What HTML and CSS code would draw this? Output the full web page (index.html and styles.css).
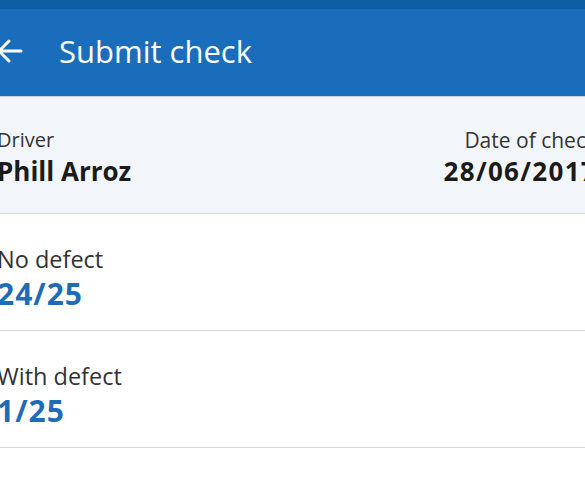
FILE: index.html
```html
<!DOCTYPE html>
<html>
<head>
<meta charset="utf-8">
<link rel="stylesheet" href="styles.css">
</head>
<body>
<div class="screen">
  <div class="statusbar"></div>
  <header class="appbar">
    <svg class="back" width="30" height="30" viewBox="0 0 30 30" aria-hidden="true">
      <path d="M26 15 H4 M14 5 L4 15 L14 25" fill="none" stroke="#fff" stroke-width="3" stroke-linecap="round" stroke-linejoin="round"/>
    </svg>
    <h1 class="title">Submit check</h1>
  </header>
  <section class="summary">
    <div class="field">
      <div class="label">Driver</div>
      <div class="value">Phill Arroz</div>
    </div>
    <div class="field right">
      <div class="label">Date of check</div>
      <div class="value date">28/06/2017</div>
    </div>
  </section>
  <section class="row">
    <div class="label">No defect</div>
    <div class="count">24/25</div>
  </section>
  <section class="row">
    <div class="label">With defect</div>
    <div class="count">1/25</div>
  </section>
</div>
</body>
</html>
```
FILE: styles.css
```css
html, body {
  margin: 0;
  padding: 0;
  background: #ffffff;
  overflow: hidden;
}
body {
  font-family: "Open Sans", "Liberation Sans", sans-serif;
  color: #2b2b2b;
}
.screen {
  width: 600px;
  margin-left: -3px;
}
.statusbar {
  height: 9px;
  background: #0e5ea6;
}
.appbar {
  height: 87px;
  background: #1a6dbb;
  display: flex;
  align-items: center;
  padding-bottom: 4px;
  box-sizing: border-box;
  box-shadow: 0 1px 1px rgba(0,0,0,0.15);
  position: relative;
}
.back {
  margin-left: -2px;
  margin-right: 34px;
}
.title {
  margin: 0;
  color: #fff;
  font-weight: 400;
  font-size: 31px;
}
.summary {
  height: 118px;
  background: #f2f6fa;
  border-bottom: 1px solid #d6d6d6;
  display: flex;
  justify-content: space-between;
  align-items: center;
  padding-top: 5px;
  box-sizing: border-box;
}
.field.right {
  text-align: right;
}
.label {
  font-size: 20px;
  color: #333;
  line-height: 28px;
}
.field.right .label {
  font-size: 21px;
}
.value {
  font-size: 26px;
  font-weight: 700;
  color: #1b1b1b;
  line-height: 34px;
}
.value.date {
  letter-spacing: 1.3px;
}
.row {
  height: 117px;
  border-bottom: 1px solid #d6d6d6;
  display: flex;
  flex-direction: column;
  justify-content: center;
  padding-top: 12px;
  box-sizing: border-box;
}
.row .label {
  font-size: 23.5px;
  line-height: 32px;
}
.count {
  font-size: 30px;
  font-weight: 700;
  color: #1e6cb7;
  line-height: 38px;
  letter-spacing: 1px;
}
```
